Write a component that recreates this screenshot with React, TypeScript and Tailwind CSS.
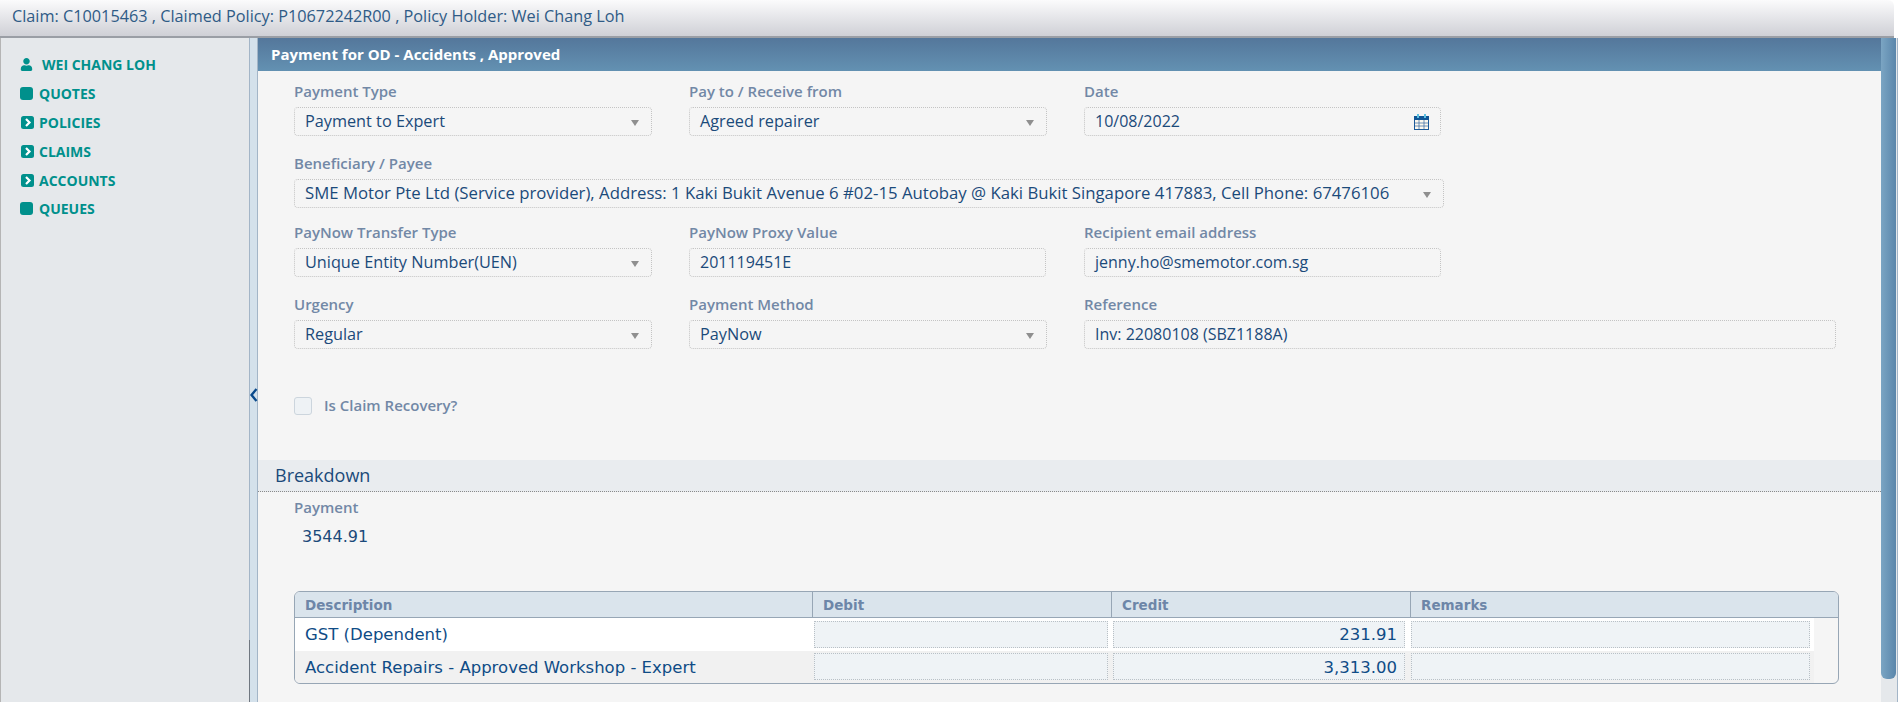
import { FaUser } from "react-icons/fa";

type Nav = { name: string; icon: "box" | "chevron" };

const navItems: Nav[] = [
  { name: "QUOTES", icon: "box" },
  { name: "POLICIES", icon: "chevron" },
  { name: "CLAIMS", icon: "chevron" },
  { name: "ACCOUNTS", icon: "chevron" },
  { name: "QUEUES", icon: "box" },
];

const rows = [
  { name: "GST (Dependent)", credit: "231.91", bg: "bg-white", pad: "pt-[2px]" },
  { name: "Accident Repairs - Approved Workshop - Expert", credit: "3,313.00", bg: "bg-[#f1f1f1]", pad: "pt-[4px]" },
];

function NavIcon({ icon }: { icon: Nav["icon"] }) {
  if (icon === "box") {
    return <span className="mr-px h-[13px] w-[13px] shrink-0 rounded-[3px] bg-[#00908c]" />;
  }
  return (
    <svg width="13" height="13" viewBox="0 0 13 13" className="ml-px shrink-0">
      <rect width="13" height="13" rx="2.5" fill="#00908c" />
      <path d="M5 3 L8.5 6.5 L5 10" fill="none" stroke="#fff" strokeWidth="2.2" />
    </svg>
  );
}

function Label({ children }: { children: string }) {
  return <div className="text-[15px] font-semibold leading-[18px] text-[#7288a6]">{children}</div>;
}

function Field({
  label,
  value,
  select,
  calendar,
  className,
  textSize = "text-[16px]",
}: {
  label: string;
  value: string;
  select?: boolean;
  calendar?: boolean;
  className: string;
  textSize?: string;
}) {
  return (
    <div className={className}>
      <Label>{label}</Label>
      <div
        className={`mt-[7px] flex h-[29px] items-center justify-between rounded-[4px] border border-dotted border-[#c4c4c4] pb-[1px] pl-[10px] pr-[12px] text-[#1b4a7a] ${textSize}`}
      >
        <span className="whitespace-nowrap">{value}</span>
        {select && (
          <span className="mt-[4px] h-0 w-0 border-x-[4px] border-t-[6px] border-x-transparent border-t-[#8f8f8f]" />
        )}
        {calendar && (
          <svg width="15" height="16" viewBox="0 0 15 16" className="-mr-[1px] mt-[1px]">
            <rect x="0.5" y="2.5" width="14" height="13" fill="#fdf8ee" stroke="#1c5a9a" />
            <rect x="0" y="2" width="15" height="4" fill="#0f5595" />
            <rect x="3" y="0" width="2" height="4" fill="#5cc0e0" />
            <rect x="10" y="0" width="2" height="4" fill="#5cc0e0" />
            <path d="M5 6v9M10 6v9M1 9h13M1 12h13" stroke="#4a76a8" strokeWidth="0.8" />
          </svg>
        )}
      </div>
    </div>
  );
}

function CellInput({ value, className }: { value?: string; className: string }) {
  return (
    <div
      className={`flex h-[27px] items-center justify-end border border-dotted border-[#b9c0c6] bg-[#eff3f6] pr-[7px] ${className}`}
    >
      {value}
    </div>
  );
}

export default function App() {
  return (
    <div className="flex h-[702px] w-[1898px] flex-col overflow-hidden bg-white font-['Open_Sans','Noto_Sans',sans-serif]">
      <div className="flex h-[38px] w-[1894px] shrink-0 items-center rounded-tr-[6px] border-b-2 border-[#9a9ea5] bg-gradient-to-b from-[#fbfbfc] to-[#cfd0d6] pl-[12px] pb-[3px] text-[16.25px] text-[#2f5b86]">
        Claim: C10015463 , Claimed Policy: P10672242R00 , Policy Holder: Wei Chang Loh
      </div>

      <div className="flex min-h-0 flex-1">
        <aside className="w-[249px] shrink-0 border-l border-[#b5b5b5] bg-[#e5e8eb] pl-[19px] pt-[14px] text-[14px] font-bold text-[#00908c]">
          <div className="flex h-[24px] items-center gap-[9px]">
            <FaUser size={13} />
            <span>WEI CHANG LOH</span>
          </div>
          <div className="pt-[1px]">
            {navItems.map((item) => (
              <div key={item.name} className="mt-[4.8px] flex h-[24px] items-center gap-[5px]">
                <NavIcon icon={item.icon} />
                <span>{item.name}</span>
              </div>
            ))}
          </div>
        </aside>

        <div className="flex w-[9px] shrink-0 flex-col items-start border-r border-r-[#a3b5c7] bg-[#d4e1eb]">
          <div className="flex h-[602px] w-full flex-col border-l border-l-[#a3b5c7] pt-[350px]">
            <svg width="8" height="14" viewBox="0 0 8 14">
              <path d="M6.5 1 L1.5 7 L6.5 13" fill="none" stroke="#0a4a8c" strokeWidth="2.4" />
            </svg>
          </div>
          <div className="w-full flex-1 border-l border-l-[#6f7780]" />
        </div>

        <main className="min-w-0 flex-1 bg-[#f5f5f5]">
          <div className="flex h-[33px] items-center bg-gradient-to-b from-[#54779b] to-[#6391b2] pl-[13px] text-[15px] font-bold text-white">
            Payment for OD - Accidents , Approved
          </div>

          <div className="pl-[36px] pt-[11px]">
            <div className="flex gap-[37px]">
              <Field className="w-[358px]" textSize="text-[16.25px]" label="Payment Type" value="Payment to Expert" select />
              <Field className="w-[358px]" textSize="text-[16.25px]" label="Pay to / Receive from" value="Agreed repairer" select />
              <Field className="w-[357px]" label="Date" value="10/08/2022" calendar />
            </div>
            <Field
              className="mt-[18px] w-[1150px]"
              textSize="text-[16.75px]"
              label="Beneficiary / Payee"
              value="SME Motor Pte Ltd (Service provider), Address: 1 Kaki Bukit Avenue 6 #02-15 Autobay @ Kaki Bukit Singapore 417883, Cell Phone: 67476106"
              select
            />
            <div className="mt-[15px] flex gap-[37px]">
              <Field className="w-[358px]" textSize="text-[16.25px]" label="PayNow Transfer Type" value="Unique Entity Number(UEN)" select />
              <Field className="mr-px w-[357px]" label="PayNow Proxy Value" value="201119451E" />
              <Field className="w-[357px]" label="Recipient email address" value="jenny.ho@smemotor.com.sg" />
            </div>
            <div className="mt-[18px] flex gap-[37px]">
              <Field className="w-[358px]" textSize="text-[16.25px]" label="Urgency" value="Regular" select />
              <Field className="w-[358px]" textSize="text-[16.25px]" label="Payment Method" value="PayNow" select />
              <Field className="w-[752px]" label="Reference" value="Inv: 22080108 (SBZ1188A)" />
            </div>
            <div className="mt-[48px] flex h-[18px] items-center gap-[12px]">
              <span className="h-[18px] w-[18px] rounded-[3px] border border-[#ccd5dd] bg-[#eef2f5]" />
              <div className="-mt-[2px]">
                <Label>Is Claim Recovery?</Label>
              </div>
            </div>
          </div>

          <div className="mt-[45px] flex h-[32px] items-center border-b border-dotted border-[#8a8a8a] bg-[#e9ecef] pl-[17px] text-[18px] text-[#1b4a7a]">
            Breakdown
          </div>

          <div className="pl-[36px]">
            <div className="mt-[6px]">
              <Label>Payment</Label>
            </div>
            <div className="mt-[11px] pl-[8px] font-['DejaVu_Sans',sans-serif] text-[16px] leading-[20px] text-[#1b4a7a]">
              3544.91
            </div>

            <div className="mt-[44px] w-[1545px] overflow-hidden rounded-[6px] border border-[#97a6b5] font-['DejaVu_Sans',sans-serif] text-[16.5px] text-[#0f4c86]">
              <div className="flex h-[26px] items-center border-b border-[#97a6b5] bg-[#dae4ec] text-[13.5px] font-bold text-[#6d86a8]">
                <div className="flex h-full w-[518px] items-center border-r border-[#97a6b5] pl-[10px] pt-[2px]">Description</div>
                <div className="flex h-full w-[299px] items-center border-r border-[#97a6b5] pl-[10px] pt-[2px]">Debit</div>
                <div className="flex h-full w-[299px] items-center border-r border-[#97a6b5] pl-[10px] pt-[2px]">Credit</div>
                <div className="flex h-full flex-1 items-center pl-[10px] pt-[2px]">Remarks</div>
              </div>
              {rows.map((row) => (
                <div key={row.name} className="flex h-[32.5px] items-center pr-[24px]">
                  <div className={`flex h-full w-[1520px] items-center ${row.bg}`}>
                    <div className={`w-[519px] whitespace-nowrap pl-[10px] ${row.pad}`}>{row.name}</div>
                    <CellInput className="w-[294px]" />
                    <CellInput className={`ml-[5px] w-[292px] ${row.pad}`} value={row.credit} />
                    <CellInput className="ml-[6px] w-[399px]" />
                  </div>
                </div>
              ))}
            </div>
          </div>
        </main>

        <div className="flex w-[17px] shrink-0 flex-col border-r border-[#a3b5c7] bg-[#e5e8eb]">
          <div className="h-[641px] w-[15px] rounded-b-[6px] bg-gradient-to-r from-[#7ba5c3] to-[#5a86ab]" />
        </div>
      </div>
    </div>
  );
}
